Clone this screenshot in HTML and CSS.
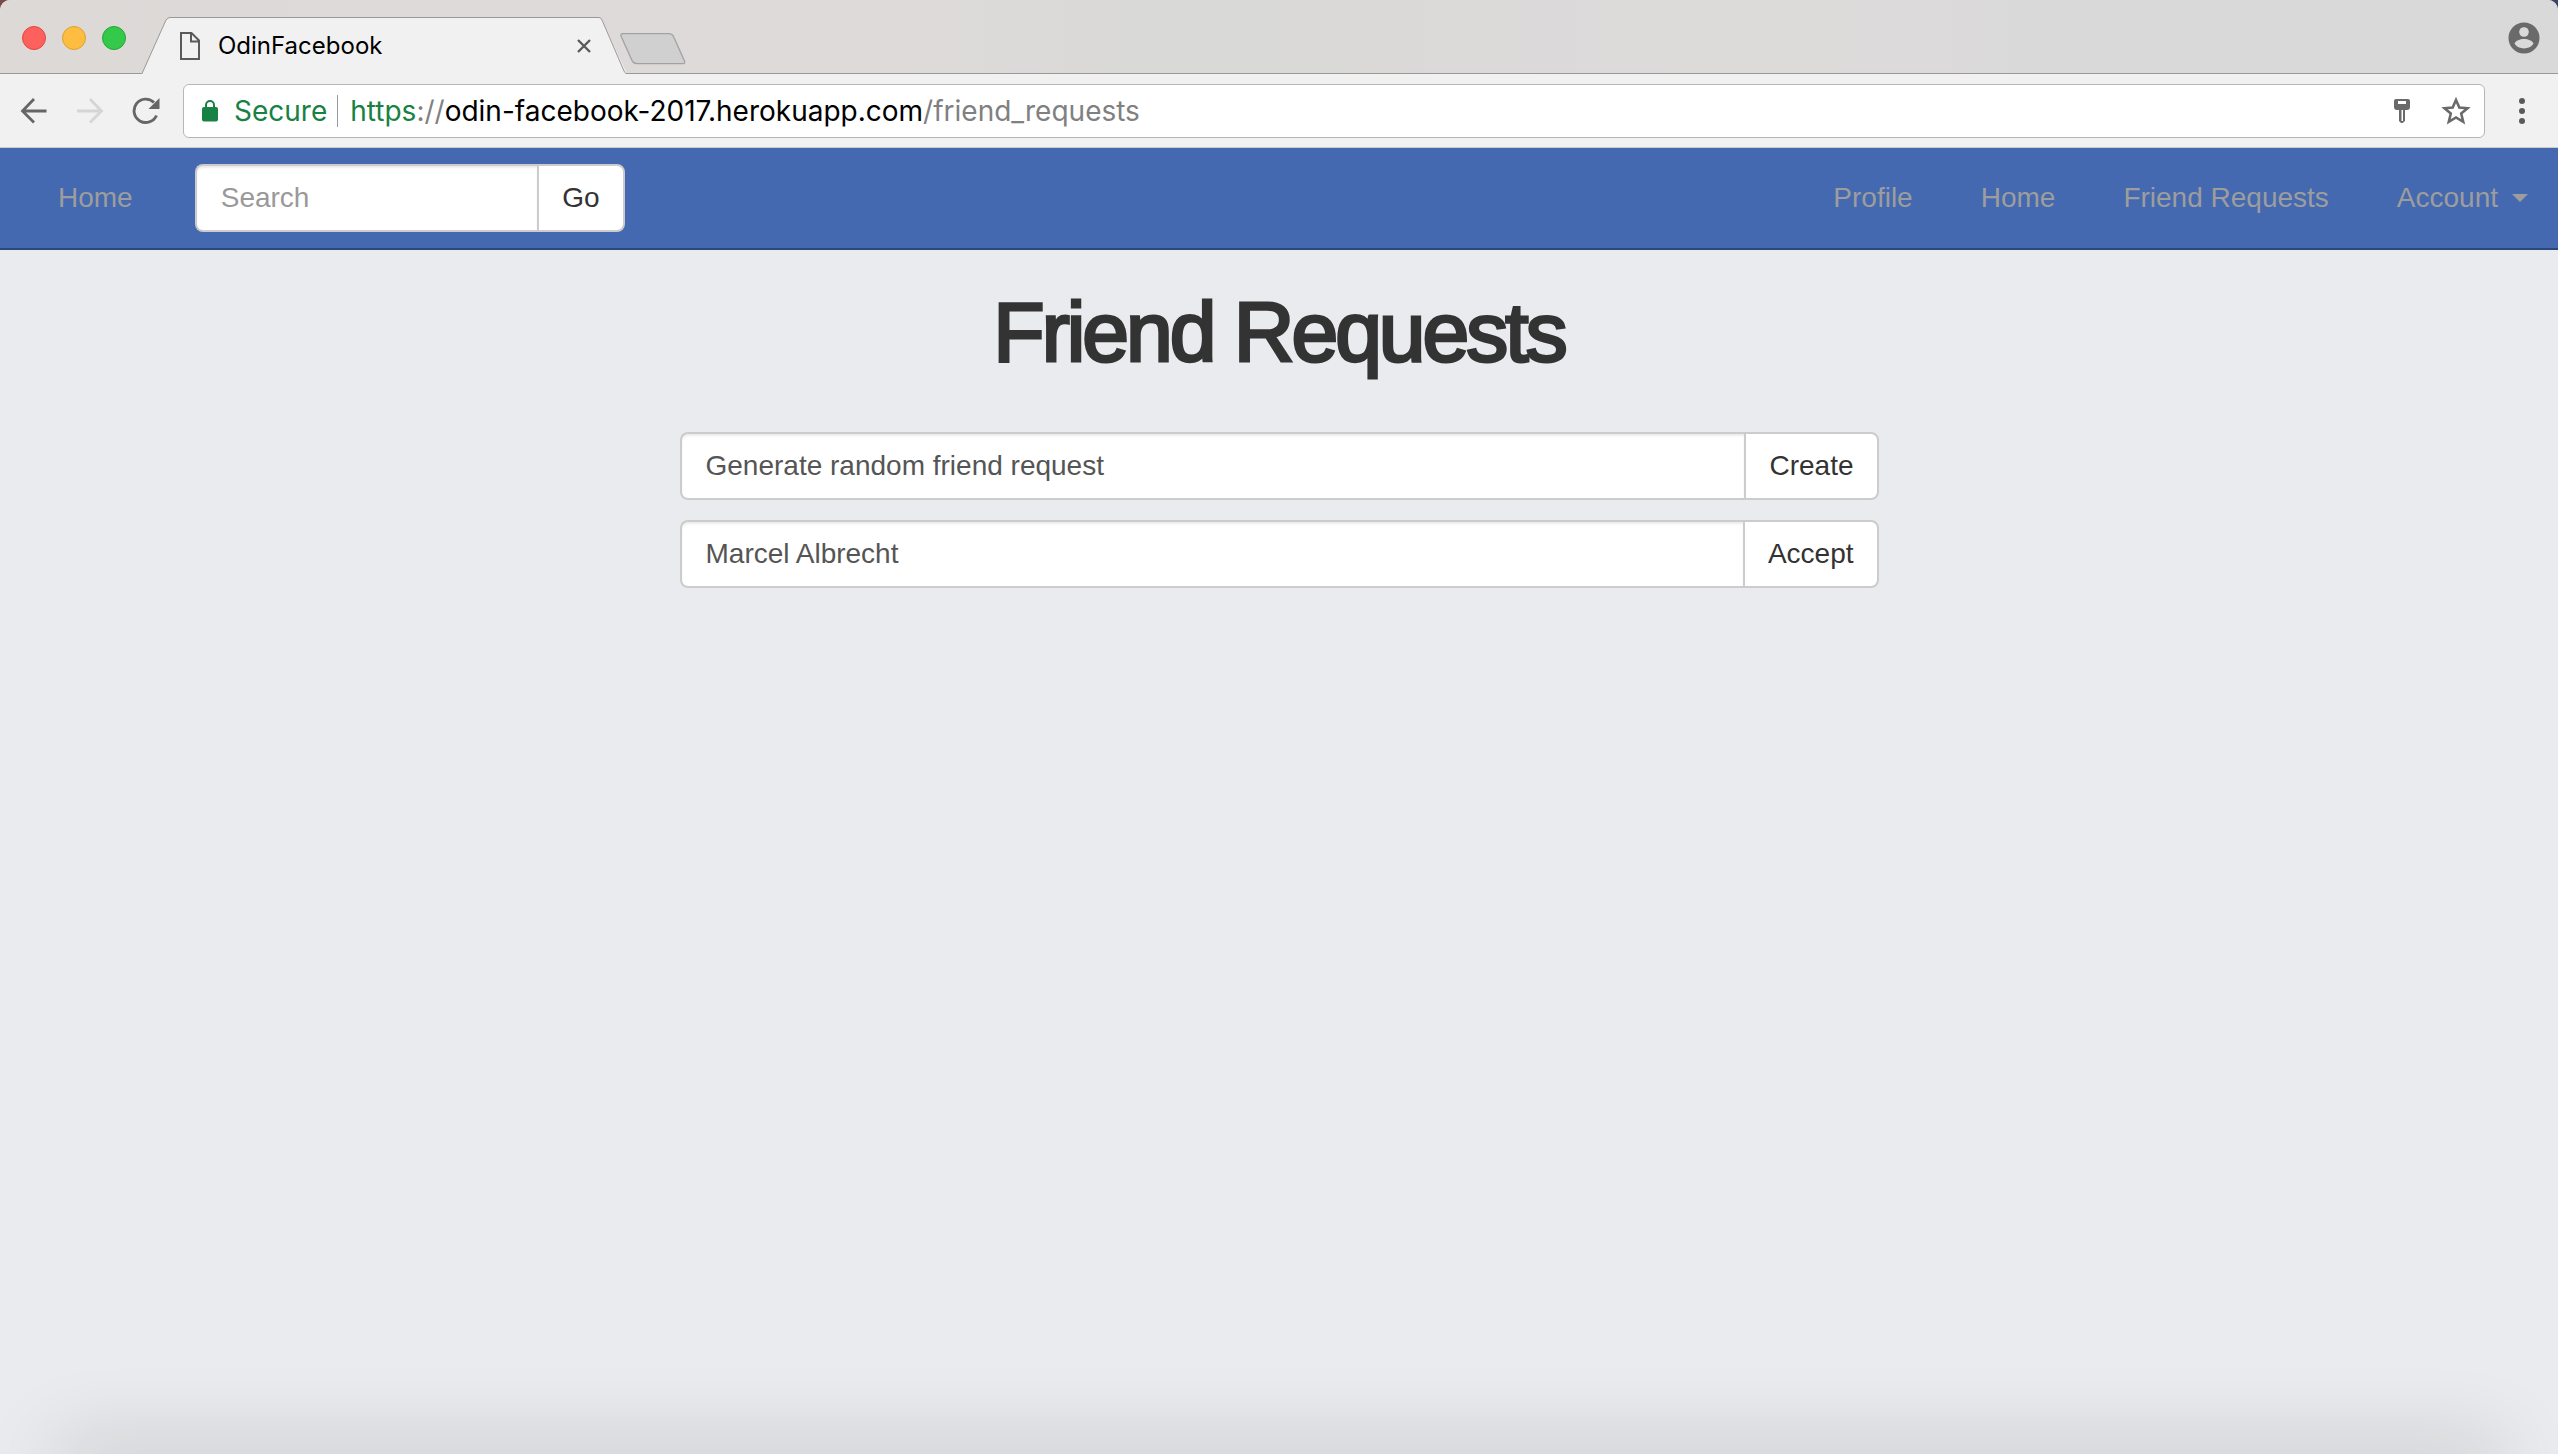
FILE: index.html
```html
<!DOCTYPE html>
<html lang="en">
<head>
<meta charset="utf-8">
<title>OdinFacebook</title>
<link rel="stylesheet" href="styles.css">
</head>
<body>
<div class="window">
  <div class="tabstrip">
    <div class="lights">
      <button class="light light-close" aria-label="Close window"></button>
      <button class="light light-min" aria-label="Minimize window"></button>
      <button class="light light-zoom" aria-label="Zoom window"></button>
    </div>
    <div class="tab">
      <svg class="tab-edge tab-edge-left" width="28" height="57" viewBox="0 0 28 57" aria-hidden="true"><path d="M0 57L24 3Q26 .5 28 .5V57Z" fill="#f1f1f1"/><path d="M0 56.500L24 3Q26 .5 28 .5" fill="none" stroke="#999"/></svg>
      <div class="tab-body">
        <svg width="20" height="28" viewBox="0 0 20 28" aria-hidden="true"><path d="M1 1H11.500L19 8.500V27H1ZM11 1V9.500H19" fill="none" stroke="#5a5a5a" stroke-width="2"/></svg>
        <span class="tab-title">OdinFacebook</span>
        <button class="icon-button" aria-label="Close tab"><svg width="14" height="14" viewBox="0 0 14 14"><path d="M1 1L13 13M13 1L1 13" stroke="#5a5a5a" stroke-width="2.400"/></svg></button>
      </div>
      <svg class="tab-edge" width="28" height="57" viewBox="0 0 28 57" aria-hidden="true"><path d="M28 57L3 3Q2 .5 0 .5V57Z" fill="#f1f1f1"/><path d="M28 56.500H27Q26 56 25 54L3 3Q2 .5 0 .5" fill="none" stroke="#999"/></svg>
    </div>
    <button class="icon-button new-tab" aria-label="New tab"><svg width="66" height="32" viewBox="0 0 66 32"><path d="M3 .7H49Q52 .7 53.500 3.500L64.500 28Q65.500 30.700 63 30.700H17Q13.500 30.700 12 27.500L1 3Q.3 .7 3 .7Z" fill="#d0d0d0" stroke="#a3a2a2" stroke-width="1.300"/></svg></button>
    <button class="icon-button user" aria-label="Current user"><svg width="32" height="32" viewBox="0 0 32 32"><circle cx="16" cy="16" r="15.500" fill="#6a6a6a"/><circle cx="16" cy="10" r="4.800" fill="#dadada"/><path d="M6.500 21.500C9 15.500 23 15.500 25.500 21.500C22 28 10 28 6.500 21.500Z" fill="#dadada"/></svg></button>
  </div>

  <div class="toolbar">
    <button class="icon-button" aria-label="Back"><svg width="28" height="28" viewBox="0 0 28 28"><path d="M26.500 14H3M14 2L2.500 14L14 25.500" fill="none" stroke="#666" stroke-width="2.800"/></svg></button>
    <button class="icon-button" aria-label="Forward" disabled><svg width="28" height="28" viewBox="0 0 28 28"><path d="M1 14H25M14 2L25.500 14L14 25.500" fill="none" stroke="#d5d5d5" stroke-width="2.800"/></svg></button>
    <button class="icon-button" aria-label="Reload"><svg width="28" height="28" viewBox="0 0 28 28"><path d="M22 5.500A11.700 11.700 0 1 0 24.500 18.500" fill="none" stroke="#666" stroke-width="2.900"/><path d="M27.500 1V12H16.500Z" fill="#666"/></svg></button>
    <div class="omnibox">
      <svg width="16" height="22" viewBox="0 0 16 22" aria-hidden="true"><rect y="7" width="16" height="14.500" rx="2" fill="#188144"/><path d="M4 8V5A4 4 0 0 1 12 5V8" fill="none" stroke="#188144" stroke-width="2"/></svg>
      <span class="secure">Secure</span>
      <div class="url" role="textbox" aria-label="Address" tabindex="0"><span class="scheme">https</span>://<span class="host">odin-facebook-2017.herokuapp.com</span>/friend_requests</div>
      <div class="page-actions">
        <button class="icon-button" aria-label="Saved passwords"><svg width="16" height="26" viewBox="0 0 16 26"><path fill-rule="evenodd" d="M2 1H14Q16 1 16 3V9Q16 12 13 12H11V23L8.500 25H7L5 23V12H3Q0 12 0 9V3Q0 1 2 1ZM4 3V6H12V3ZM7.500 12H9V23H7.500Z" fill="#6a6a6a"/></svg></button>
        <button class="icon-button" aria-label="Bookmark this page"><svg width="30" height="30" viewBox="0 0 30 30"><path d="M15 4L18.300 11.500L26.500 12.200L20.200 17.500L22.200 25.800L15 21.400L7.800 25.800L9.800 17.500L3.500 12.200L11.700 11.500Z" fill="none" stroke="#6a6a6a" stroke-width="2.600"/></svg></button>
      </div>
    </div>
    <button class="icon-button" aria-label="Menu"><svg width="6" height="28" viewBox="0 0 6 28"><g fill="#5a5a5a"><circle cx="3" cy="4" r="3"/><circle cx="3" cy="14" r="3"/><circle cx="3" cy="24" r="3"/></g></svg></button>
  </div>

  <nav class="navbar">
    <a class="nav-link brand" href="#">Home</a>
    <form class="input-group search">
      <input class="form-control" type="text" placeholder="Search" aria-label="Search">
      <button class="btn" type="button">Go</button>
    </form>
    <ul class="nav-list">
      <li><a class="nav-link" href="#">Profile</a></li>
      <li><a class="nav-link" href="#">Home</a></li>
      <li><a class="nav-link" href="#">Friend Requests</a></li>
      <li><a class="nav-link" href="#">Account <span class="caret"></span></a></li>
    </ul>
  </nav>

  <main class="content">
    <h1>Friend Requests</h1>
    <form class="input-group">
      <input class="form-control" type="text" value="Generate random friend request" aria-label="New request" readonly>
      <button class="btn" type="button">Create</button>
    </form>
    <form class="input-group">
      <input class="form-control" type="text" value="Marcel Albrecht" aria-label="Request from" readonly>
      <button class="btn" type="button">Accept</button>
    </form>
  </main>
</div>
</body>
</html>
```
FILE: styles.css
```css
* { box-sizing: border-box; }

html { background: linear-gradient(90deg, #7a4a4a, #3c4268); }

body {
  margin: 0;
  font-family: "Liberation Sans", Arial, sans-serif;
  font-size: 28px;
  line-height: 40px;
  color: #333;
}

.window {
  position: relative;
  display: flex;
  flex-direction: column;
  min-height: 100vh;
  overflow: hidden;
  border-radius: 10px 10px 0 0;
  background: #e9ebee;
}

/* soft shade along the bottom edge of the window */
.window::after {
  content: "";
  position: absolute;
  left: 64px;
  right: 64px;
  bottom: -20px;
  height: 20px;
  box-shadow: 0 0 80px 8px rgba(0, 0, 0, .2);
  pointer-events: none;
}

button { font: inherit; color: inherit; }
svg { display: block; }

.icon-button {
  display: block;
  padding: 0;
  border: 0;
  background: none;
}

/* Tab strip */
.tabstrip {
  display: flex;
  align-items: flex-end;
  height: 74px;
  background: linear-gradient(#999, #999) bottom / 100% 1px no-repeat,
    linear-gradient(90deg, #dcd9d7, #dedada 35%, #d9d9d8 45%, #dddada 70%, #d9d9d9 85%);
}

.lights {
  display: flex;
  gap: 16px;
  padding: 0 16px 24px 22px;
}

.light {
  width: 24px;
  height: 24px;
  padding: 0;
  border: 1px solid;
  border-radius: 50%;
}
.light-close { background: #fc615d; border-color: #e2463f; }
.light-min { background: #fdbd40; border-color: #dfa032; }
.light-zoom { background: #34c94a; border-color: #24a732; }

.tab {
  display: flex;
  width: 485px;
}

.tab-body {
  display: flex;
  flex: 1;
  align-items: center;
  gap: 18px;
  padding: 0 8px 0 10px;
  border-top: 1px solid #999;
  background: #f1f1f1;
}

.tab-title {
  flex: 1;
  font-family: Inter, sans-serif;
  font-size: 24px;
  line-height: 32px;
  color: #000;
}

.new-tab { margin: 0 auto 9px -7px; }
.user { margin: 0 18px 20px 0; }

/* Toolbar */
.toolbar {
  display: flex;
  align-items: center;
  gap: 28px;
  height: 74px;
  padding: 0 33px 0 20px;
  border-bottom: 1px solid #ccc;
  background: #f1f1f1;
}

.omnibox {
  display: flex;
  flex: 1;
  align-items: center;
  gap: 14px;
  height: 54px;
  margin: 0 6px 0 -5px;
  padding: 0 13px 0 18px;
  border: 1px solid #b6b6b6;
  border-radius: 6px;
  background: #fff;
  font-family: Inter, sans-serif;
  font-size: 28px;
}

.secure, .scheme { color: #188144; }
.secure { padding-left: 2px; }
.host { color: #000; }

.url {
  flex: 1;
  margin-left: -4px;
  padding-left: 12px;
  border-left: 1px solid #999;
  line-height: 32px;
  color: #808080;
}

.page-actions {
  display: flex;
  align-items: center;
  gap: 31px;
}

/* Site navigation */
.navbar {
  display: flex;
  align-items: center;
  height: 102px;
  padding-right: 30px;
  border-bottom: 2px solid #29487d;
  background: #4469b0;
}

.nav-link {
  display: flex;
  align-items: center;
  color: #9d9d9d;
  text-decoration: none;
}

.brand { padding: 0 62px 0 58px; }

.nav-list {
  display: flex;
  gap: 68px;
  margin: 0 0 0 auto;
  padding: 0;
  list-style: none;
}

.caret {
  margin-left: 14px;
  border: 8px solid transparent;
  border-top-color: currentColor;
  border-bottom: 0;
}

/* Text field with an attached button */
.input-group {
  display: flex;
  height: 68px;
  margin-bottom: 20px;
}

.form-control {
  flex: 1;
  min-width: 0;
  padding: 0 24px;
  border: 2px solid #ccc;
  border-right: 0;
  border-radius: 8px 0 0 8px;
  background: #fff;
  box-shadow: inset 0 2px 2px rgba(0, 0, 0, .075);
  font: inherit;
  color: #555;
}
.form-control::placeholder { color: #999; opacity: 1; }

.btn {
  padding: 0 23px;
  border: 2px solid #ccc;
  border-radius: 0 8px 8px 0;
  background: #fff;
}

.search {
  width: 430px;
  margin: 0;
}

/* Page content */
.content {
  width: 50%;
  margin: 0 auto;
  padding: 36px 40px;
}

h1 {
  margin: 0 0 54px;
  font-size: 84px;
  font-weight: 400;
  line-height: 92px;
  letter-spacing: -3px;
  text-align: center;
  -webkit-text-stroke: 3px #333;
}
```
